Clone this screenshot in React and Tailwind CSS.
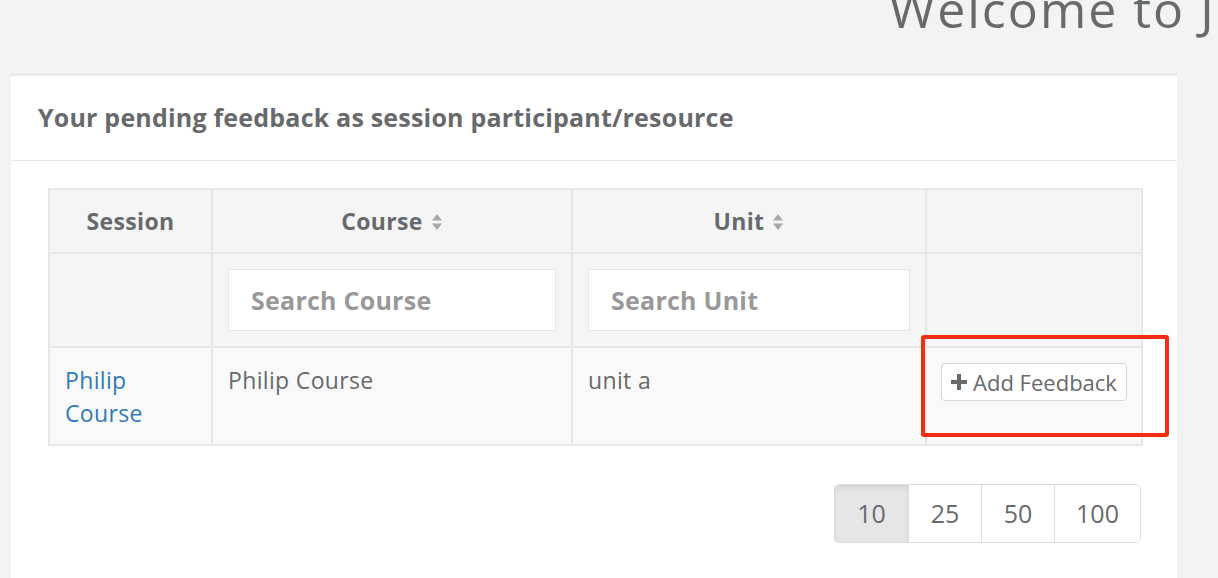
import React from 'react'

const font = { fontFamily: '"Open Sans", "Noto Sans", sans-serif' }

function SortIcon() {
    return (
        <svg className="ml-2 inline-block h-[18px] w-[12px] align-[-1px]" viewBox="0 0 12 18" aria-hidden="true">
            <path d="M6 1 L11 7.5 H1 Z" fill="#a8a8a8" />
            <path d="M6 17 L11 10.5 H1 Z" fill="#a8a8a8" />
        </svg>
    )
}

function App() {
    return (
        <div className="relative h-[578px] w-[1218px] overflow-hidden bg-[#f3f3f4] text-[#676a6c]" style={font}>
            <div className="flex h-[73px] pl-[889px]">
                <h1 className="-mt-[16px] whitespace-nowrap text-[50px] leading-[50px] font-normal tracking-[2px] text-[#676a6c]">
                    Welcome to J
                </h1>
            </div>

            <div className="ml-[11px] w-[1166px] border-t-[3px] border-[#e7eaec] bg-white pb-[40px]">
                <div className="flex h-[85px] items-center border-b border-[#e7eaec] px-[27px]">
                    <h5 className="text-[25px] font-bold tracking-[0.2px]">
                        Your pending feedback as session participant/resource
                    </h5>
                </div>

                <div className="pl-[37px] pr-[36px] pt-[27px]">
                    <table className="w-[1093px] table-fixed border-collapse text-[23px] tracking-[0.015em]">
                        <colgroup>
                            <col className="w-[163px]" />
                            <col className="w-[360px]" />
                            <col className="w-[354px]" />
                            <col className="w-[216px]" />
                        </colgroup>
                        <thead>
                            <tr className="h-[64px] bg-[#f5f5f6]">
                                <th className="border-2 border-[#e7e7e7] text-center font-bold">Session</th>
                                <th className="border-2 border-[#e7e7e7] text-center font-bold">
                                    Course<SortIcon />
                                </th>
                                <th className="border-2 border-[#e7e7e7] text-center font-bold">
                                    Unit<SortIcon />
                                </th>
                                <th className="border-2 border-[#e7e7e7]" />
                            </tr>
                            <tr className="h-[94px] bg-[#f5f5f6]">
                                <td className="border-2 border-[#e7e7e7]" />
                                <td className="border-2 border-[#e7e7e7] px-[15px]">
                                    <input
                                        type="text"
                                        placeholder="Search Course"
                                        className="h-[62px] w-full border border-[#e5e6e7] bg-white px-[22px] text-[25px] font-bold tracking-[0.01em] placeholder:text-[#999] outline-none"
                                    />
                                </td>
                                <td className="border-2 border-[#e7e7e7] px-[15px]">
                                    <input
                                        type="text"
                                        placeholder="Search Unit"
                                        className="h-[62px] w-full border border-[#e5e6e7] bg-white px-[22px] text-[25px] font-bold tracking-[0.01em] placeholder:text-[#999] outline-none"
                                    />
                                </td>
                                <td className="border-2 border-[#e7e7e7]" />
                            </tr>
                        </thead>
                        <tbody>
                            <tr className="h-[98px] bg-[#f9f9f9] align-top">
                                <td className="border-2 border-[#e7e7e7] px-[15px] pt-[16px] leading-[33px]">
                                    <a href="#" className="text-[#337ab7]">Philip Course</a>
                                </td>
                                <td className="border-2 border-[#e7e7e7] px-[15px] pt-[16px] leading-[33px]">Philip Course</td>
                                <td className="border-2 border-[#e7e7e7] px-[15px] pt-[16px] leading-[33px]">unit a</td>
                                <td className="border-2 border-[#e7e7e7] px-[14px] pt-[15px]">
                                    <button
                                        type="button"
                                        className="flex h-[38px] w-[186px] items-center justify-center gap-[6px] rounded-[4px] border border-[#d6d6d6] bg-white text-[22px] tracking-normal text-[#676a6c]"
                                    >
                                        <svg className="h-[16px] w-[16px]" viewBox="0 0 16 16" aria-hidden="true">
                                            <path d="M6 0h4v6h6v4h-6v6h-4v-6h-6v-4h6z" fill="#676a6c" />
                                        </svg>
                                        Add Feedback
                                    </button>
                                </td>
                            </tr>
                        </tbody>
                    </table>

                    <div className="mt-[38px] flex justify-end">
                        <div className="flex h-[59px] overflow-hidden rounded-[5px] border border-[#dddddd] text-[25px] text-[#676a6c]">
                            <span className="flex w-[73px] items-center justify-center bg-[#e6e6e6] shadow-[inset_0_3px_5px_rgba(0,0,0,0.08)]">10</span>
                            <span className="flex w-[73px] items-center justify-center border-l border-[#dddddd] bg-white">25</span>
                            <span className="flex w-[73px] items-center justify-center border-l border-[#dddddd] bg-white">50</span>
                            <span className="flex w-[86px] items-center justify-center border-l border-[#dddddd] bg-white">100</span>
                        </div>
                    </div>
                </div>
            </div>

            <div className="absolute left-[921px] top-[335px] h-[102px] w-[248px] rounded-[3px] border-[4px] border-[#f32d11]" />
        </div>
    )
}

export default App
